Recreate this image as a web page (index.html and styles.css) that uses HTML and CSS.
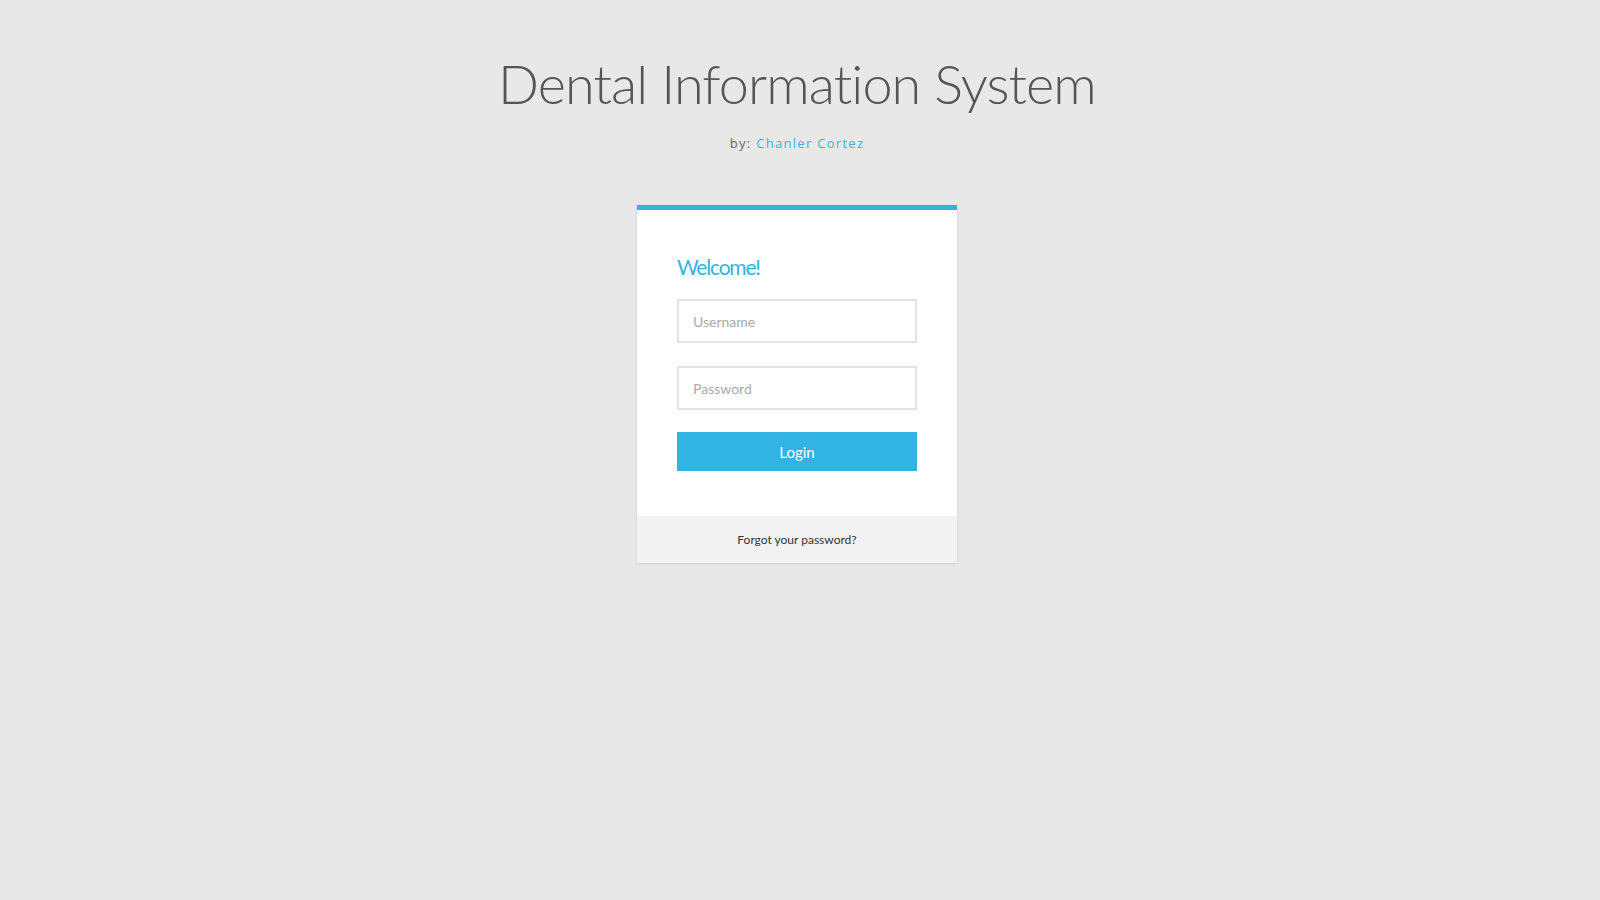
FILE: index.html
```html
<!DOCTYPE html>
<html lang="en">
<head>
    <meta charset="UTF-8">
    <title>Dental Information System</title>
    <link rel="stylesheet" href="styles.css">
</head>
<body>
    <!-- Header -->
    <div class="header">
        <h1>Dental Information System</h1>
        <p class="byline">by: <span>Chanler Cortez</span></p>
    </div>

    <!-- Login Box -->
    <div class="login-box">
        <div class="login-body">
            <h3>Welcome!</h3>
            <input type="text" placeholder="Username">
            <input type="password" placeholder="Password">
            <button>Login</button>
        </div>
        <div class="login-footer">
            <a href="#">Forgot your password?</a>
        </div>
    </div>
</body>
</html>
```

FILE: styles.css
```css
* {
    margin: 0;
    padding: 0;
    box-sizing: border-box;
}

body {
    background: #e8e8e8;
    font-family: 'Lato', sans-serif;
    color: #555;
    min-height: 100vh;
    padding-right: 6px;
}

/* Header */
.header {
    text-align: center;
    padding-top: 52px;
}

.header h1 {
    font-size: 54px;
    font-weight: 300;
    letter-spacing: -0.9px;
    font-variant-ligatures: none;
    color: #555;
    line-height: 64px;
}

.byline {
    margin-top: 18px;
    font-family: 'Open Sans', sans-serif;
    font-size: 13px;
    letter-spacing: 1.3px;
    color: #666;
}

.byline span {
    color: #31b4e3;
}

/* Login Box */
.login-box {
    width: 320px;
    margin: 53px auto 0;
    background: #fff;
    border-top: 5px solid #31b4e3;
    box-shadow: 0 1px 3px rgba(0, 0, 0, 0.12);
}

.login-body {
    padding: 45px 40px 45px;
    display: flex;
    flex-direction: column;
}

.login-body h3 {
    font-size: 21px;
    line-height: 24px;
    font-weight: 400;
    letter-spacing: -1.2px;
    color: #31b4e3;
    margin-bottom: 20px;
}

.login-body input {
    height: 44px;
    border: 2px solid #e2e2e2;
    padding: 0 14px;
    font-family: 'Lato', sans-serif;
    font-size: 14px;
    color: #555;
    margin-bottom: 23px;
    outline: none;
}

.login-body input::placeholder {
    color: #a9a9a9;
}

.login-body input:last-of-type {
    margin-bottom: 22px;
}

.login-body button {
    height: 39px;
    background: #31b4e3;
    border: none;
    color: #fff;
    font-family: 'Lato', sans-serif;
    font-size: 15px;
    cursor: pointer;
}

.login-footer {
    background: #f2f2f2;
    height: 47px;
    display: flex;
    align-items: center;
    justify-content: center;
}

.login-footer a {
    font-size: 12px;
    color: #333;
    text-decoration: none;
}
```
